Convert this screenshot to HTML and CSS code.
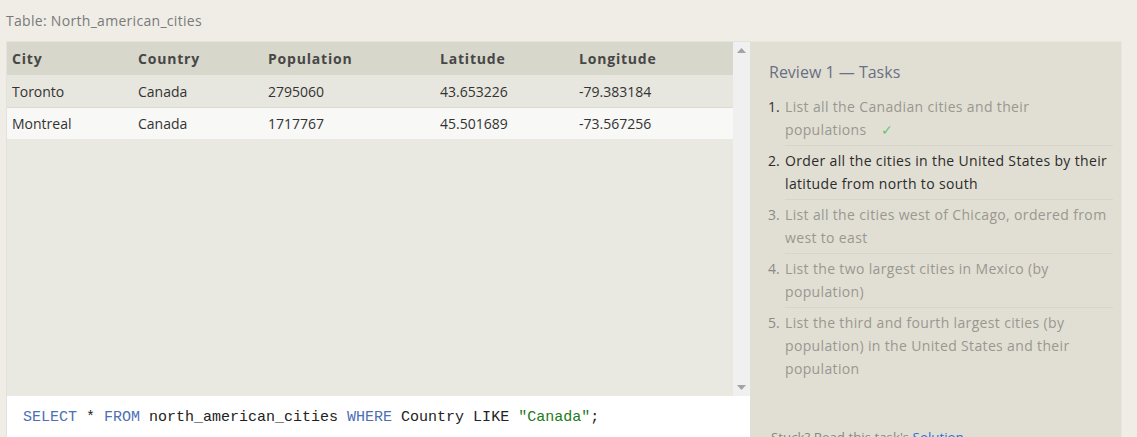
FILE: index.html
```html
<!DOCTYPE html>
<html>
<head>
<meta charset="utf-8">
<link rel="stylesheet" href="styles.css">
</head>
<body>
<div class="page">
  <div class="caption">Table: North_american_cities</div>
  <div class="main">
    <div class="left">
      <div class="results">
        <div class="table-area">
          <table class="data">
            <thead>
              <tr><th class="c1">City</th><th class="c2">Country</th><th class="c3">Population</th><th class="c4">Latitude</th><th class="c5">Longitude</th></tr>
            </thead>
            <tbody>
              <tr class="odd"><td>Toronto</td><td>Canada</td><td>2795060</td><td>43.653226</td><td>-79.383184</td></tr>
              <tr class="even"><td>Montreal</td><td>Canada</td><td>1717767</td><td>45.501689</td><td>-73.567256</td></tr>
            </tbody>
          </table>
        </div>
        <div class="scrollbar">
          <svg class="arrow" width="9" height="5" viewBox="0 0 9 5"><path d="M0 5 L4.5 0 L9 5 Z" fill="#a3a3a3"/></svg>
          <svg class="arrow" width="9" height="5" viewBox="0 0 9 5"><path d="M0 0 L4.5 5 L9 0 Z" fill="#a3a3a3"/></svg>
        </div>
      </div>
      <div class="editor"><span class="kw">SELECT</span> * <span class="kw">FROM</span> north_american_cities <span class="kw">WHERE</span> Country LIKE <span class="str">"Canada"</span>;</div>
    </div>
    <div class="right">
      <div class="tasks-title">Review 1 — Tasks</div>
      <ol class="tasks">
        <li class="done"><span class="num">1.</span><span class="txt">List all the Canadian cities and their populations<span class="check">✓</span></span></li>
        <li class="current"><span class="num">2.</span><span class="txt">Order all the cities in the United States by their latitude from north to south</span></li>
        <li><span class="num">3.</span><span class="txt">List all the cities west of Chicago, ordered from west to east</span></li>
        <li><span class="num">4.</span><span class="txt">List the two largest cities in Mexico (by population)</span></li>
        <li class="last"><span class="num">5.</span><span class="txt">List the third and fourth largest cities (by population) in the United States and their population</span></li>
      </ol>
      <div class="stuck">Stuck? Read this task's <span class="link">Solution</span></div>
    </div>
  </div>
</div>
</body>
</html>
```

FILE: styles.css
```css
html, body {
  margin: 0;
  padding: 0;
  background: #efede6;
  font-family: "Open Sans", "Noto Sans", sans-serif;
  overflow: hidden;
}
.page {
  padding-left: 6px;
  height: 437px;
  display: flex;
  flex-direction: column;
}
.caption {
  height: 41px;
  box-sizing: border-box;
  padding-top: 11px;
  font-size: 14px;
  line-height: 20px;
  color: #7a7a7a;
  letter-spacing: 0.3px;
}
.main {
  display: flex;
  flex: 1;
  min-height: 0;
}
.left {
  width: 744px;
  display: flex;
  flex-direction: column;
}
.results {
  height: 355px;
  display: flex;
  background: #e9e8e1;
  border-left: 1px solid #e3e2dc;
  border-top: 1px solid #e4e3dc;
  box-sizing: border-box;
}
.table-area {
  flex: 1;
}
.data {
  width: 100%;
  border-collapse: collapse;
  font-size: 14px;
  color: #333;
}
.data th {
  background: #d8d7cb;
  height: 33px;
  text-align: left;
  font-weight: 700;
  color: #474747;
  padding: 0 0 0 5px;
  letter-spacing: 0.8px;
}
.data td {
  height: 32px;
  padding: 0 0 0 5px;
  color: #333;
}
.c1 { width: 121px; }
.c2 { width: 125px; }
.c3 { width: 167px; }
.c4 { width: 134px; }
.data tr.odd td { background: #e8e7df; }
.data tr.even td { background: #f8f8f7; border-top: 1px solid #dddcd4; height: 31px; }
.scrollbar {
  width: 17px;
  background: #f0f0f0;
  display: flex;
  flex-direction: column;
  justify-content: space-between;
  align-items: center;
  padding: 6px 0 6px;
  box-sizing: border-box;
}
.editor {
  flex: 1;
  background: #ffffff;
  border-left: 1px solid #e3e2dc;
  padding: 10px 0 0 16px;
  font-family: "Liberation Mono", "DejaVu Sans Mono", monospace;
  font-size: 15px;
  line-height: 24px;
  color: #222;
}
.kw { color: #4d6fb5; }
.str { color: #1b7a1b; }
.right {
  width: 372px;
  background: #e1dfd4;
  border-top: 1px solid #e8e6dd;
  border-right: 1px solid #e8e6dd;
  box-sizing: border-box;
  padding: 19px 8px 0 18px;
  display: flex;
  flex-direction: column;
}
.tasks-title {
  font-size: 16px;
  line-height: 22px;
  color: #6a7082;
  padding-left: 1px;
}
.tasks {
  list-style: none;
  margin: 12px 0 0 0;
  padding: 0;
  font-size: 14px;
  line-height: 23px;
  color: #999790;
  letter-spacing: 0.35px;
}
.tasks li {
  display: flex;
}
.num {
  width: 17px;
  flex: none;
  color: #8c8a84;
  letter-spacing: 0;
}
.txt {
  flex: 1;
  padding: 3px 0 4px;
  border-bottom: 1px solid #d7d5ca;
}
.tasks li:first-child .txt { padding-top: 0; }
.tasks li .num { padding-top: 3px; }
.tasks li:first-child .num { padding-top: 0; }
.tasks li.done .num { color: #333; }
.tasks li.current .num,
.tasks li.current .txt { color: #2b2b2b; }
.tasks li.last .txt { border-bottom: none; }
.check {
  display: inline-block;
  color: #6cc36c;
  margin-left: 14px;
  letter-spacing: 0;
}
.stuck {
  margin-top: 44px;
  font-size: 13.3px;
  color: #8a8880;
  padding-left: 3px;
}
.link { color: #1f6fd6; }
```
